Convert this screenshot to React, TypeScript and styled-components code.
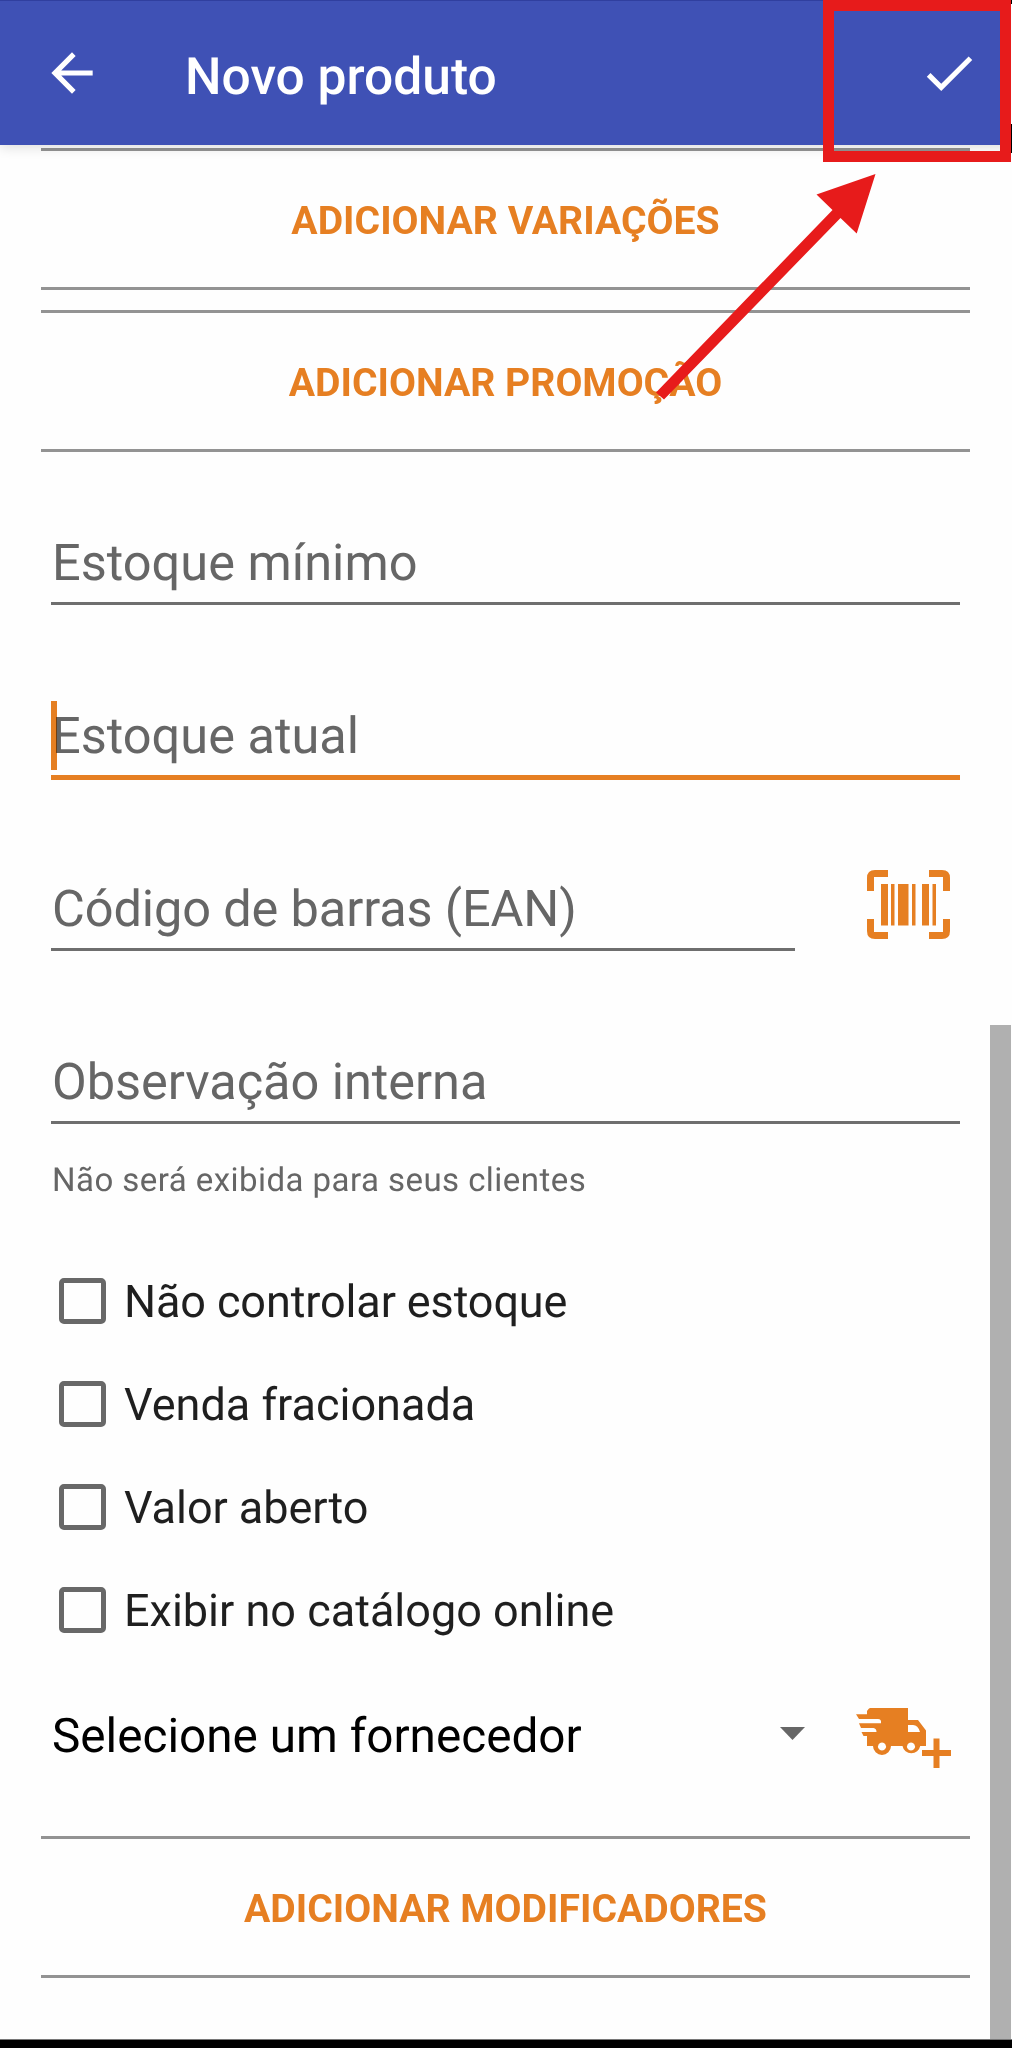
import React from 'react';
import styled, { createGlobalStyle } from 'styled-components';

const ORANGE = '#e67f22';
const RED = '#e71b1b';

const GlobalStyle = createGlobalStyle`
  html, body { margin: 0; padding: 0; background: #fff; }
  * { box-sizing: border-box; }
`;

const Screen = styled.div`
  position: relative;
  display: flex;
  flex-direction: column;
  width: 1012px;
  height: 2048px;
  overflow: hidden;
  background: #fefefe;
  font-family: Roboto, "Liberation Sans", sans-serif;
  text-rendering: geometricPrecision;
`;

const AppBar = styled.header`
  display: flex;
  flex: none;
  align-items: center;
  justify-content: space-between;
  height: 145px;
  padding: 0 32px 0 41px;
  background: #3f51b5;
  border-top: 1px solid #303f9f;
  box-shadow: 0 2px 12px rgba(0, 0, 0, 0.14);
  z-index: 1;
`;

const BarStart = styled.div`
  display: flex;
  align-items: center;
`;

const IconButton = styled.button`
  display: flex;
  padding: 0;
  border: 0;
  background: none;
  color: #fff;
`;

const Title = styled.h1`
  margin: 7px 0 0 82px;
  color: #fff;
  font-size: 51.5px;
  font-weight: 500;
  line-height: 60px;
  white-space: nowrap;
`;

const Body = styled.div`
  display: flex;
  flex: 1;
  justify-content: space-between;
  min-height: 0;
  padding-right: 1px;
`;

const Form = styled.main`
  display: flex;
  flex-direction: column;
  width: 970px;
  padding: 3px 0 0 41px;
`;

const Section = styled.button<{ $gap?: number }>`
  display: flex;
  flex: none;
  align-items: center;
  justify-content: center;
  height: 142px;
  margin: ${(p) => p.$gap ?? 0}px 0 0;
  padding: 4px 0 0;
  border: solid #939393;
  border-width: 3px 0;
  background: none;
  color: ${ORANGE};
  font-family: inherit;
  font-size: 39.15px;
  font-weight: 700;
  line-height: 46px;
  white-space: nowrap;
`;

const Fields = styled.div`
  display: flex;
  flex-direction: column;
  padding: 0 10px;
`;

const FieldRow = styled.div<{ $height: number }>`
  display: flex;
  align-items: flex-end;
  justify-content: space-between;
  height: ${(p) => p.$height}px;
`;

const Field = styled.label<{ $width?: number; $active?: boolean }>`
  display: flex;
  flex-direction: column;
  justify-content: flex-end;
  width: ${(p) => (p.$width ? `${p.$width}px` : '100%')};
  color: #666;
  font-size: 50.5px;
  line-height: 60px;
  white-space: nowrap;
  border-bottom: ${(p) => (p.$active ? `5px solid ${ORANGE}` : '3px solid #6e6e6e')};
`;

const Hint = styled.span<{ $tracking?: number }>`
  position: relative;
  height: 68px;
  padding-left: 1px;
  letter-spacing: ${(p) => p.$tracking ?? 0}px;
`;

const Cursor = styled.i`
  position: absolute;
  left: 0;
  top: -6px;
  width: 6px;
  height: 69px;
  background: ${ORANGE};
  mix-blend-mode: multiply;
`;

const Helper = styled.p`
  margin: 36px 0 0;
  padding-left: 1px;
  color: #666;
  font-size: 33px;
  letter-spacing: 0.45px;
  line-height: 42px;
  white-space: nowrap;
`;

const Checks = styled.div`
  display: flex;
  flex-direction: column;
  padding: 47px 0 0 18px;
`;

const Check = styled.label`
  display: flex;
  align-items: center;
  gap: 18px;
  height: 103px;
  color: #1f1f1f;
  font-size: 45px;
  line-height: 54px;
  white-space: nowrap;
`;

const Box = styled.span`
  width: 47px;
  height: 46px;
  border: 5px solid #686868;
  border-radius: 5px;
`;

const CheckText = styled.span<{ $tracking: number }>`
  margin-top: 3px;
  letter-spacing: ${(p) => p.$tracking}px;
`;

const Supplier = styled.div`
  display: flex;
  align-items: center;
  justify-content: space-between;
  height: 154px;
  padding: 0 19px 0 10px;
`;

const Select = styled.div`
  display: flex;
  align-items: center;
  justify-content: space-between;
  width: 754px;
  margin-bottom: 9px;
  color: #000;
  font-size: 47.7px;
  line-height: 58px;
  white-space: nowrap;
`;

const SelectText = styled.span`
  margin-top: 4px;
  padding-left: 1px;
`;

const Orange = styled.div`
  display: flex;
  color: ${ORANGE};
`;

const ScanSlot = styled(Orange)`
  padding: 0 10px 11px 0;
`;

const Scrollbar = styled.div`
  align-self: flex-end;
  width: 21px;
  height: 1014px;
  background: #b0b0b0;
`;

const BottomBar = styled.footer`
  flex: none;
  height: 9px;
  background: #000;
  border-top: 1px solid #777;
`;

const Highlight = styled.div`
  position: absolute;
  z-index: 2;
  left: 823px;
  top: 0;
  width: 188px;
  height: 162px;
  border: 11px solid ${RED};
`;

const ScreenEdge = styled.div`
  position: absolute;
  z-index: 2;
  right: 0;
  top: 0;
  width: 1px;
  height: 162px;
  background: linear-gradient(#000 4px, #fefefe 4px 124px, #000 124px 153px, #fefefe 153px);
`;

const Pointer = styled.svg`
  position: absolute;
  z-index: 2;
  left: 650px;
  top: 170px;
`;

const BackIcon = () => (
  <svg width="62" height="62" viewBox="0 0 24 24" fill="currentColor">
    <path d="M20 11H7.83l5.59-5.59L12 4l-8 8 8 8 1.41-1.41L7.83 13H20v-2z" />
  </svg>
);

const CheckIcon = () => (
  <svg width="62" height="62" viewBox="0 0 24 24" fill="currentColor">
    <path d="M9 16.17L4.83 12l-1.42 1.41L9 19 21 7l-1.41-1.41z" />
  </svg>
);

const ScanIcon = () => (
  <svg width="83" height="70" viewBox="0 0 83 70" fill="currentColor">
    <path d="M21 0v7H7v14H0V8Q0 0 8 0zM62 0h13q8 0 8 8v13h-7V7H62zM0 49h7v13h14v7H8q-8 0-8-8zM76 49h7v12q0 8-8 8H62v-7h14zM14 14h7v41.500h-7zM24 14h3.500v41.500h-3.500zM31 14h10.500v41.500H31zM45 14h3.500v41.500h-3.500zM55 14h7v41.500h-7zM65.500 14h3.500v41.500h-3.500z" />
  </svg>
);

const TruckIcon = () => (
  <svg width="95" height="60" viewBox="0 0 95 60" fill="currentColor">
    <path
      fillRule="evenodd"
      d="M14 0H52V12H62L70 22.500V38H64.200A9 9 0 0 1 46.500 38H35A9 9 0 0 1 17 38H11V28H7.500L5.500 24H20.500Q20.500 20.500 17.500 20H5L3 15.200H25Q25.500 11 22 11H3L0 6.300H11V3Q13 0 14 0ZM52 17V24H64Q62 17 57 17ZM26 34.500a4 4 0 1 0 .01 0ZM55 34.500a4 4 0 1 0 .01 0Z"
    />
    <path d="M77.500 30.500h6v11.500H95v6H83.500v12h-6V48H66v-6h11.500z" />
  </svg>
);

const ArrowDown = () => (
  <svg width="25" height="13" viewBox="0 0 25 13">
    <path d="M0 0h25L12.500 13z" fill="#666" />
  </svg>
);

const OPTIONS = [
  { text: 'Não controlar estoque', tracking: -0.12 },
  { text: 'Venda fracionada', tracking: 0 },
  { text: 'Valor aberto', tracking: -0.05 },
  { text: 'Exibir no catálogo online', tracking: 0 },
];

export default function App() {
  return (
    <Screen>
      <GlobalStyle />
      <AppBar>
        <BarStart>
          <IconButton aria-label="Voltar"><BackIcon /></IconButton>
          <Title>Novo produto</Title>
        </BarStart>
        <IconButton aria-label="Salvar"><CheckIcon /></IconButton>
      </AppBar>
      <Body>
        <Form>
          <Section>ADICIONAR VARIAÇÕES</Section>
          <Section $gap={20}>ADICIONAR PROMOÇÃO</Section>
          <Fields>
            <FieldRow $height={153}>
              <Field><Hint>Estoque mínimo</Hint></Field>
            </FieldRow>
            <FieldRow $height={175}>
              <Field $active><Hint>Estoque atual<Cursor /></Hint></Field>
            </FieldRow>
            <FieldRow $height={171}>
              <Field $width={744}><Hint $tracking={-0.13}>Código de barras (EAN)</Hint></Field>
              <ScanSlot><ScanIcon /></ScanSlot>
            </FieldRow>
            <FieldRow $height={173}>
              <Field><Hint $tracking={-0.05}>Observação interna</Hint></Field>
            </FieldRow>
            <Helper>Não será exibida para seus clientes</Helper>
          </Fields>
          <Checks>
            {OPTIONS.map(({ text, tracking }) => (
              <Check key={text}>
                <Box />
                <CheckText $tracking={tracking}>{text}</CheckText>
              </Check>
            ))}
          </Checks>
          <Supplier>
            <Select>
              <SelectText>Selecione um fornecedor</SelectText>
              <ArrowDown />
            </Select>
            <Orange><TruckIcon /></Orange>
          </Supplier>
          <Section $gap={21}>ADICIONAR MODIFICADORES</Section>
        </Form>
        <Scrollbar />
      </Body>
      <BottomBar />
      <Highlight />
      <ScreenEdge />
      <Pointer width="230" height="235" viewBox="650 170 230 235">
        <path d="M875.500 174L816.500 194.500 832.500 210 656 392.500 664 399.500 840.500 218 856.700 233.500z" fill={RED} />
      </Pointer>
    </Screen>
  );
}
